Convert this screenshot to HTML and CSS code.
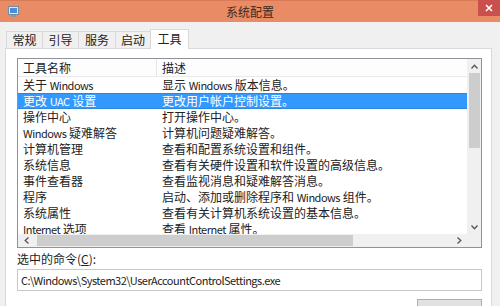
FILE: index.html
```html
<!DOCTYPE html>
<html lang="zh-CN">
<head>
  <meta charset="UTF-8">
  <title>系统配置</title>
  <link rel="stylesheet" href="styles.css">
</head>
<body>
  <div class="window">
    <div class="titlebar">
      <div class="app-icon">
        <svg width="11" height="11" viewBox="0 0 11 11">
          <rect x="0.5" y="0.5" width="10" height="8" fill="#dfe6ee" stroke="#7d8a99"/>
          <rect x="2" y="2" width="7" height="5" fill="#4a8fd8"/>
          <rect x="3" y="9" width="5" height="2" fill="#8a96a3"/>
        </svg>
      </div>
      <div class="title">系统配置</div>
      <div class="close">
        <svg width="8" height="8" viewBox="0 0 8 8">
          <path d="M1 1 L7 7 M7 1 L1 7" stroke="#fff" stroke-width="1.6"/>
        </svg>
      </div>
    </div>

    <div class="tabs">
      <div class="tab w36">常规</div>
      <div class="tab w36">引导</div>
      <div class="tab w37">服务</div>
      <div class="tab w35">启动</div>
      <div class="tab active">工具</div>
    </div>

    <div class="panel">
      <div class="listbox">
        <div class="viewport">
          <div class="row header">
            <div class="cell name">工具名称</div>
            <div class="cell desc">描述</div>
          </div>
          <div class="row">
            <div class="cell name">关于 <span class="en">Windows</span></div>
            <div class="cell desc">显示 <span class="en">Windows</span> 版本信息。</div>
          </div>
          <div class="row selected">
            <div class="cell name">更改 <span class="en">UAC</span> 设置</div>
            <div class="cell desc">更改用户帐户控制设置。</div>
          </div>
          <div class="row">
            <div class="cell name">操作中心</div>
            <div class="cell desc">打开操作中心。</div>
          </div>
          <div class="row">
            <div class="cell name"><span class="en">Windows</span> 疑难解答</div>
            <div class="cell desc">计算机问题疑难解答。</div>
          </div>
          <div class="row">
            <div class="cell name">计算机管理</div>
            <div class="cell desc">查看和配置系统设置和组件。</div>
          </div>
          <div class="row">
            <div class="cell name">系统信息</div>
            <div class="cell desc">查看有关硬件设置和软件设置的高级信息。</div>
          </div>
          <div class="row">
            <div class="cell name">事件查看器</div>
            <div class="cell desc">查看监视消息和疑难解答消息。</div>
          </div>
          <div class="row">
            <div class="cell name">程序</div>
            <div class="cell desc">启动、添加或删除程序和 <span class="en">Windows</span> 组件。</div>
          </div>
          <div class="row">
            <div class="cell name">系统属性</div>
            <div class="cell desc">查看有关计算机系统设置的基本信息。</div>
          </div>
          <div class="row">
            <div class="cell name"><span class="en">Internet</span> 选项</div>
            <div class="cell desc">查看 <span class="en">Internet</span> 属性。</div>
          </div>
        </div>

        <div class="vscroll">
          <svg class="arrow" width="7" height="5" viewBox="0 0 7 5"><path d="M0.5 4.5 L3.5 1.2 L6.5 4.5" fill="none" stroke="#555" stroke-width="1.3"/></svg>
          <div class="vthumb"></div>
          <div class="vspace"></div>
          <svg class="arrow" width="7" height="5" viewBox="0 0 7 5"><path d="M0.5 0.5 L3.5 3.8 L6.5 0.5" fill="none" stroke="#555" stroke-width="1.3"/></svg>
        </div>

        <div class="hscroll">
          <svg class="arrow" width="5" height="7" viewBox="0 0 5 7"><path d="M4.5 0.5 L1.2 3.5 L4.5 6.5" fill="none" stroke="#555" stroke-width="1.3"/></svg>
          <div class="hthumb"></div>
          <div class="hspace"></div>
          <svg class="arrow" width="5" height="7" viewBox="0 0 5 7"><path d="M0.5 0.5 L3.8 3.5 L0.5 6.5" fill="none" stroke="#555" stroke-width="1.3"/></svg>
        </div>

        <div class="corner"></div>
      </div>

      <div class="cmd-label">选中的命令(<u>C</u>):</div>
      <div class="cmd-input"><span class="en">C:\Windows\System32\UserAccountControlSettings.exe</span></div>

      <div class="actions">
        <button class="launch">启动(<u>L</u>)</button>
      </div>
    </div>
  </div>
</body>
</html>
```

FILE: styles.css
```css
* {
  box-sizing: border-box;
}

body {
  margin: 0;
  width: 500px;
  height: 306px;
  overflow: hidden;
  background: #f0f0f0;
  font-family: "Noto Sans CJK SC", sans-serif;
  font-size: 12px;
  color: #222;
}

.en {
  font-size: 11px;
  letter-spacing: -0.5px;
}

.window {
  width: 500px;
}

/* title bar */
.titlebar {
  height: 22px;
  background: #e98c65;
  border-top: 1px solid #d77a55;
  display: grid;
  grid-template-columns: 1fr auto 1fr;
  align-items: center;
}

.app-icon {
  padding-left: 8px;
  display: flex;
  align-items: center;
}

.title {
  color: #3b2a22;
  font-size: 12px;
}

.close {
  justify-self: end;
  align-self: start;
  width: 22px;
  height: 16px;
  margin-top: -1px;
  background: #c9504d;
  display: flex;
  align-items: center;
  justify-content: center;
}

/* tabs */
.tabs {
  display: flex;
  align-items: flex-end;
  padding-left: 6px;
  margin-top: 7px;
  height: 19px;
  position: relative;
  z-index: 1;
}

.tab {
  height: 17px;
  border: 1px solid #d9d9d9;
  border-bottom: none;
  background: #f0f0f0;
  margin-right: -1px;
  display: flex;
  align-items: center;
  justify-content: center;
  line-height: 1;
}

.w36 { width: 37px; }
.w37 { width: 38px; }
.w35 { width: 36px; }

.tab.active {
  width: 39px;
  height: 20px;
  margin-bottom: -1px;
  background: #fff;
  padding-bottom: 2px;
}

/* panel */
.panel {
  margin-left: 5px;
  width: 487px;
  height: 300px;
  background: #fff;
  border: 1px solid #d9d9d9;
  padding: 9px 9px 0 11px;
}

.listbox {
  width: 465px;
  height: 190px;
  border: 1px solid #8e9399;
  display: grid;
  grid-template-columns: 1fr 14px;
  grid-template-rows: 1fr 13px;
}

.viewport {
  overflow: hidden;
}

.row {
  display: flex;
  height: 16px;
  align-items: center;
  line-height: 1;
}

.row.header {
  height: 18px;
  border-bottom: 1px solid #eaeaea;
  background: #fdfdfd;
}

.cell {
  white-space: nowrap;
}

.cell.name {
  width: 139px;
  padding-left: 5px;
}

.cell.desc {
  padding-left: 5px;
}

.row.header .cell.name {
  border-right: 1px solid #e5e5e5;
  height: 100%;
  display: flex;
  align-items: center;
}

.row.selected {
  background: #3399ff;
  border-top: 1px solid #2d86e0;
  border-bottom: 1px solid #2d86e0;
  color: #fff;
}

/* scroll bars */
.vscroll {
  background: #f0f0f0;
  display: flex;
  flex-direction: column;
  align-items: center;
  padding: 5px 0 4px;
}

.vthumb {
  width: 11px;
  height: 75px;
  margin-top: 4px;
  background: #cdcdcd;
}

.vspace {
  flex: 1;
}

.hscroll {
  background: #f0f0f0;
  display: flex;
  align-items: center;
  padding: 0 5px 0 6px;
}

.hthumb {
  width: 316px;
  height: 11px;
  margin-left: 8px;
  background: #cdcdcd;
}

.hspace {
  flex: 1;
}

.corner {
  background: #f0f0f0;
}

/* command */
.cmd-label {
  margin-top: 3px;
  height: 16px;
  line-height: 16px;
}

.cmd-input {
  margin-top: 2px;
  width: 465px;
  height: 22px;
  border: 1px solid #c8c8c8;
  padding-left: 3px;
  line-height: 20px;
}

.actions {
  display: flex;
  justify-content: flex-end;
  margin-top: 8px;
  width: 465px;
}

.launch {
  width: 65px;
  height: 23px;
  border: 1px solid #adadad;
  background: #e1e1e1;
  font-family: inherit;
  font-size: 12px;
  color: #222;
  padding: 4px 0 0;
}
```
